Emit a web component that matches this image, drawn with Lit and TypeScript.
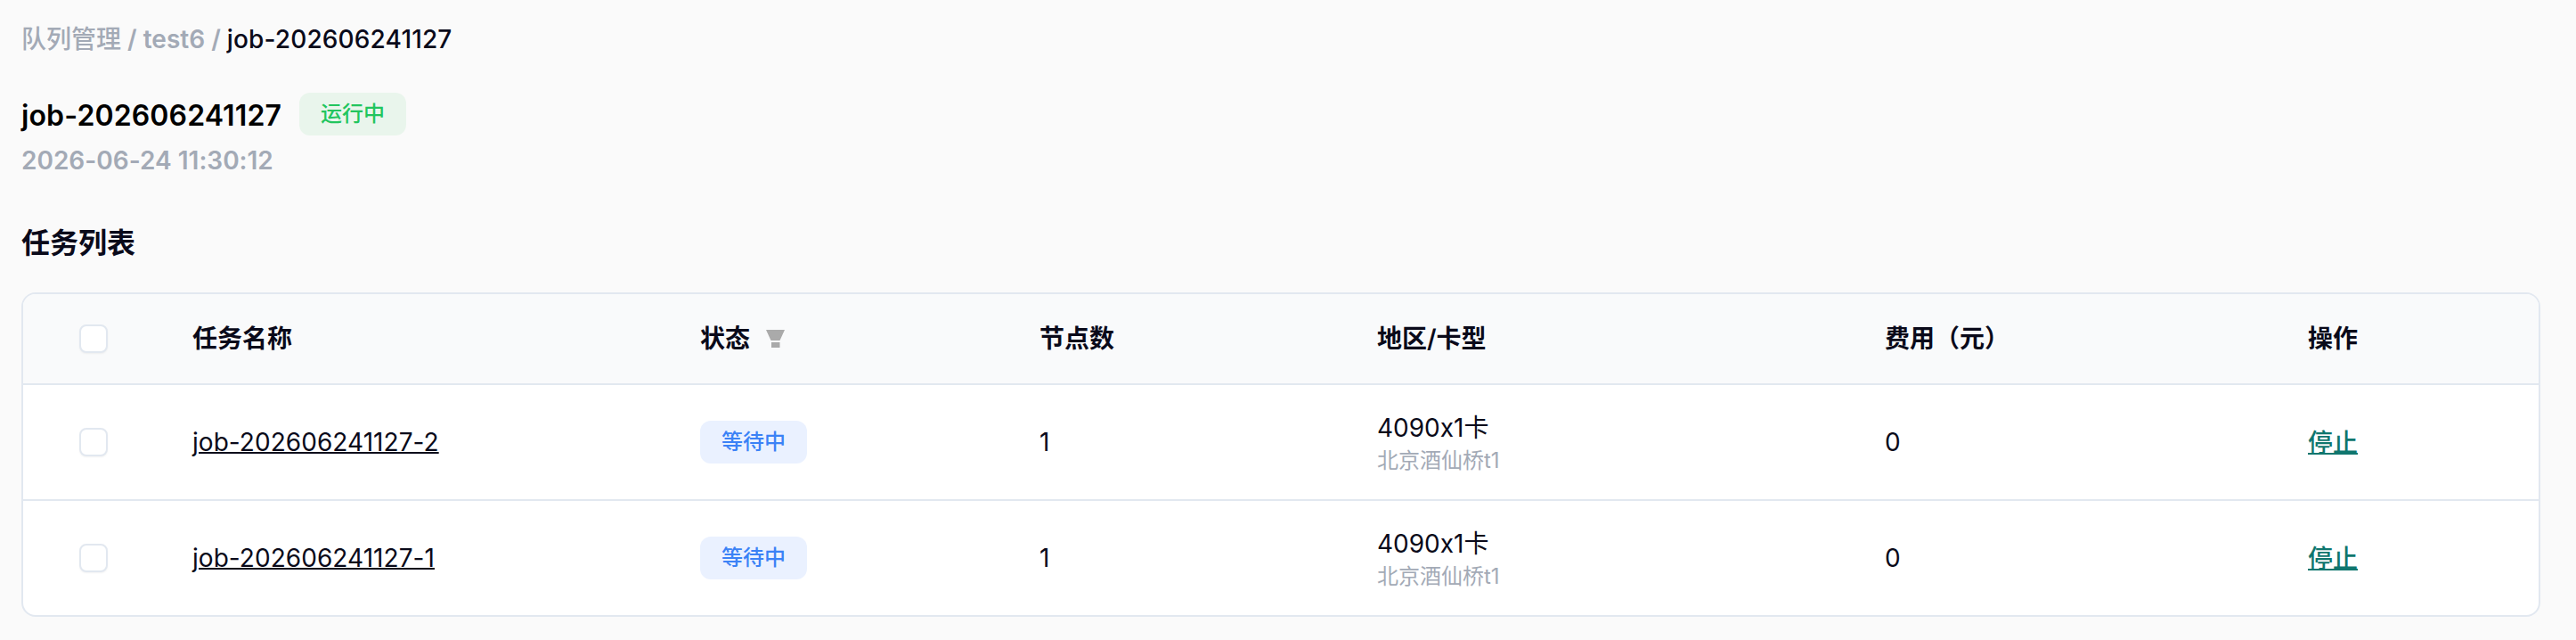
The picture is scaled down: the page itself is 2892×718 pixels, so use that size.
import { LitElement, html, css } from "lit";
import { customElement } from "lit/decorators.js";

const rows = [
  { name: "job-202606241127-2" },
  { name: "job-202606241127-1" },
];

@customElement("app-root")
export class AppRoot extends LitElement {
  static styles = css`
    :host {
      display: block;
      min-height: 718px;
      box-sizing: border-box;
      padding: 24px 40px 0 24px;
      background: #fafafa;
      color: #0a0a1a;
      font-family: Inter, "Noto Sans CJK SC", sans-serif;
      font-size: 28px;
      line-height: 40px;
      font-variant-ligatures: none;
      font-feature-settings: "calt" 0;
    }
    .crumbs { font-weight: 600; color: #a3aab6; }
    .crumbs i { font-style: normal; font-weight: 500; }
    .crumbs b { font-weight: 500; color: #0a0a1a; letter-spacing: 0.15px; }
    .title-row { display: flex; align-items: center; gap: 20px; margin-top: 40px; height: 48px; }
    .title { font-size: 32px; font-weight: 600; color: #000; letter-spacing: 0.12px; padding-top: 3px; }
    .badge {
      display: inline-flex; align-items: center; justify-content: center;
      width: 120px; height: 48px; border-radius: 12px;
      font-size: 24px; font-weight: 500;
    }
    .run { background: #e9f5ec; color: #22c55e; }
    .wait { background: #eaf1ff; color: #3b82f6; }
    .date { margin-top: 8px; color: #a3aab6; font-weight: 600; }
    h2 { margin: 51px 0 0; font-size: 32px; line-height: 44px; font-weight: 600; }
    .table {
      margin-top: 33px;
      border: 2px solid #e2e8f0;
      border-radius: 16px;
      background: #fff;
      overflow: hidden;
    }
    .row {
      display: grid;
      grid-template-columns: 190px 570px 381px 379px 570px 475px 1fr;
      align-items: center;
      height: 128px;
      border-top: 2px solid #e2e8f0;
    }
    .head { height: 100px; border-top: none; background: #f9fafb; font-weight: 600; }
    .check { display: flex; padding-left: 63px; }
    .box {
      width: 32px; height: 32px; box-sizing: border-box;
      border: 2px solid #e2e8f0; border-radius: 8px; background: #fff;
      box-shadow: 0 1px 2px rgba(0,0,0,.05);
    }
    .status { display: flex; align-items: center; gap: 18px; }
    .status svg { display: block; width: 21px; height: 20px; }
    a { color: inherit; text-decoration: underline; text-decoration-thickness: 2px; letter-spacing: 0.05px; }
    .stop { color: #0f766e; font-weight: 500; letter-spacing: 0; }
    .action { padding-top: 2px; }
    .region { padding-top: 2px; }
    .gpu { line-height: 40px; }
    .sub { font-size: 24px; line-height: 34px; color: #a3aab6; }
  `;

  render() {
    return html`
      <div class="crumbs"><i>队列管理</i> / test6 / <b>job-202606241127</b></div>
      <div class="title-row">
        <span class="title">job-202606241127</span>
        <span class="badge run">运行中</span>
      </div>
      <div class="date">2026-06-24 11:30:12</div>
      <h2>任务列表</h2>
      <div class="table">
        <div class="row head">
          <div class="check"><span class="box"></span></div>
          <div>任务名称</div>
          <div class="status">
            <span>状态</span>
            <svg viewBox="0 0 21 20"><path d="M0 0H21L15.5 12H5.5Z M6 14H15.5V20H6Z" fill="#aaa"/></svg>
          </div>
          <div>节点数</div>
          <div>地区/卡型</div>
          <div>费用（元）</div>
          <div>操作</div>
        </div>
        ${rows.map(
          (r) => html`
            <div class="row">
              <div class="check"><span class="box"></span></div>
              <div><a href="#">${r.name}</a></div>
              <div><span class="badge wait">等待中</span></div>
              <div>1</div>
              <div class="region">
                <div class="gpu">4090x1卡</div>
                <div class="sub">北京酒仙桥t1</div>
              </div>
              <div>0</div>
              <div class="action"><a class="stop" href="#">停止</a></div>
            </div>
          `
        )}
      </div>
    `;
  }
}
